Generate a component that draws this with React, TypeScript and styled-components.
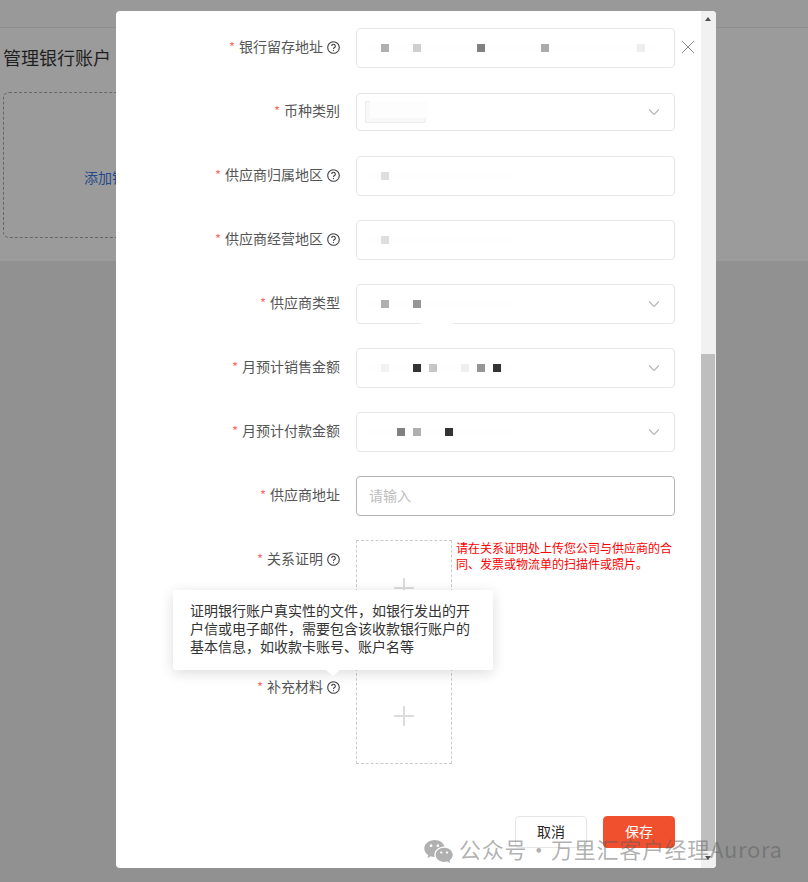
import styled, { createGlobalStyle } from "styled-components";
import { RiWechatFill } from "react-icons/ri";

const GlobalStyle = createGlobalStyle`
  html, body {
    margin: 0;
    padding: 0;
    background: #919191;
  }
  body {
    font-family: "Noto Sans CJK SC", "Liberation Sans", sans-serif;
    overflow: hidden;
  }
`;

const Page = styled.div`
  position: relative;
  width: 808px;
  height: 882px;
  overflow: hidden;
  background: #919191;
`;

const TopBar = styled.div`
  height: 27px;
  background: #999;
  border-bottom: 1px solid #8f8f8f;
`;

const Panel = styled.div`
  height: 234px;
  padding: 17px 0 0 3px;
  box-sizing: border-box;
  background: #9b9b9b;
  border-bottom: 1px solid #929292;
`;

const PageTitle = styled.h1`
  margin: 0 0 22px;
  font-size: 18px;
  font-weight: 400;
  line-height: 25px;
  color: #1f1f1f;
`;

const AddCard = styled.div`
  display: flex;
  align-items: center;
  justify-content: center;
  width: 246px;
  height: 146px;
  box-sizing: border-box;
  padding-top: 23px;
  border: 1px dashed #666;
  border-radius: 6px;
  font-size: 14px;
  color: #254a8c;
`;

const Modal = styled.div`
  position: absolute;
  top: 11px;
  left: 116px;
  display: flex;
  width: 600px;
  height: 857px;
  overflow: hidden;
  background: #fff;
  border-radius: 4px;
`;

const FormArea = styled.div`
  flex: 1;
  padding-top: 17px;
`;

const Row = styled.div<{ $gap?: number }>`
  display: flex;
  align-items: flex-start;
  gap: 16px;
  margin-bottom: ${(p) => p.$gap ?? 24}px;
`;

const Label = styled.div<{ $h?: number }>`
  display: flex;
  align-items: center;
  justify-content: flex-end;
  width: 224px;
  height: ${(p) => p.$h ?? 40}px;
  padding-bottom: 4px;
  box-sizing: border-box;
  font-size: 14px;
  color: #555;
`;

const Star = styled.span`
  margin-right: 4px;
  font-size: 13px;
  color: #fb6b66;
`;

const Help = styled.svg`
  width: 13px;
  height: 13px;
  margin: 3px 0 0 4px;
  flex: none;
`;

const Field = styled.div<{ $h?: number; $active?: boolean }>`
  position: relative;
  display: flex;
  align-items: center;
  justify-content: space-between;
  width: 319px;
  height: ${(p) => p.$h ?? 40}px;
  box-sizing: border-box;
  padding: 0 14px 0 8px;
  background: #fff;
  border: 1px solid ${(p) => (p.$active ? "#b3b3b3" : "#e6e6e6")};
  border-radius: 4px;
`;

const Placeholder = styled.span`
  padding: 0 0 3px 4px;
  font-size: 14px;
  color: #bdbdbd;
`;

const Mosaic = styled.div`
  display: flex;
  height: 8px;
`;

const Cell = styled.i<{ $c?: string }>`
  display: block;
  width: 8px;
  height: 8px;
  background: ${(p) => p.$c ?? "#fefefe"};
`;

const Tag = styled.div`
  position: relative;
  width: 61px;
  height: 22px;
  box-sizing: border-box;
  background: #f8f8f8;
  border: 1px solid #ececec;
  border-radius: 2px;
`;

const TagSmudge = styled.div`
  position: absolute;
  top: -1px;
  left: 4px;
  width: 58px;
  height: 17px;
  background: #fdfdfd;
`;

const BorderSmudge = styled.div`
  position: absolute;
  left: 64px;
  bottom: -2px;
  width: 32px;
  height: 4px;
  background: #fff;
`;

const Chevron = styled.svg`
  width: 12px;
  height: 8px;
  flex: none;
`;

const Uploads = styled.div`
  display: flex;
  align-items: flex-start;
  gap: 4px;
`;

const UploadBox = styled.div`
  display: flex;
  align-items: center;
  justify-content: center;
  width: 96px;
  height: 96px;
  box-sizing: border-box;
  border: 1px dashed #ccc;
  flex: none;
`;

const Plus = styled.svg`
  width: 22px;
  height: 22px;
`;

const Hint = styled.div`
  width: 219px;
  font-size: 12px;
  line-height: 16px;
  color: #f00;
`;

const Footer = styled.div`
  display: flex;
  justify-content: flex-end;
  gap: 16px;
  margin: 52px 26px 0 0;
`;

const Button = styled.button<{ $primary?: boolean }>`
  width: 72px;
  height: 32px;
  padding: 0 0 2px;
  box-sizing: border-box;
  border: 1px solid ${(p) => (p.$primary ? "#f1502f" : "#e6e6e6")};
  border-radius: 4px;
  background: ${(p) => (p.$primary ? "#f1502f" : "#fff")};
  font-family: inherit;
  font-size: 14px;
  color: ${(p) => (p.$primary ? "#fff" : "#262626")};
`;

const Scrollbar = styled.div`
  display: flex;
  flex-direction: column;
  align-items: flex-start;
  width: 15px;
  background: #f1f1f1;
`;

const ArrowUp = styled.div`
  width: 0;
  height: 0;
  margin: 6px 0 0 4px;
  border-left: 3.5px solid transparent;
  border-right: 3.5px solid transparent;
  border-bottom: 4px solid #505050;
`;

const ArrowDown = styled.div`
  width: 0;
  height: 0;
  margin: 5px 0 0 4px;
  border-left: 3.5px solid transparent;
  border-right: 3.5px solid transparent;
  border-top: 4px solid #505050;
`;

const Thumb = styled.div`
  width: 14px;
  height: 497px;
  margin-top: 333px;
  background: #bebebe;
`;

const CloseIcon = styled.svg`
  position: absolute;
  top: 29px;
  left: 565px;
  width: 14px;
  height: 14px;
`;

const Tooltip = styled.div`
  position: absolute;
  top: 579px;
  left: 57px;
  width: 320px;
  height: 80px;
  box-sizing: border-box;
  padding: 11px 17px;
  background: #fff;
  border-radius: 3px;
  box-shadow: 0 3px 14px rgba(0, 0, 0, 0.14);
  font-size: 14px;
  line-height: 18px;
  color: #333;

  &::after {
    content: "";
    position: absolute;
    left: 153px;
    bottom: -6px;
    border-left: 7px solid transparent;
    border-right: 7px solid transparent;
    border-top: 6px solid #fff;
  }
`;

const Watermark = styled.div`
  position: absolute;
  top: 833px;
  left: 423px;
  display: flex;
  align-items: flex-start;
  gap: 5px;
  font-size: 22px;
  letter-spacing: 0.7px;
  line-height: 30px;
  white-space: nowrap;
  color: rgba(90, 90, 90, 0.48);
`;

const WatermarkIcon = styled(RiWechatFill)`
  margin-top: 3px;
`;

const WatermarkDot = styled.span`
  margin: 0 -5px;
`;

type Cells = Record<number, string>;

function Blur({ cells, length = 36 }: { cells: Cells; length?: number }) {
  return (
    <Mosaic>
      {Array.from({ length }, (_, i) => (
        <Cell key={i} $c={cells[i]} />
      ))}
    </Mosaic>
  );
}

function HelpIcon() {
  return (
    <Help viewBox="0 0 13 13" fill="none" stroke="#3d3d3d" strokeWidth="1.1">
      <circle cx="6.5" cy="6.5" r="5.8" />
      <path d="M4.7 5.1a1.8 1.8 0 1 1 2.8 1.5c-.7.4-1 .8-1 1.4" />
      <path d="M6.5 9.1v1" />
    </Help>
  );
}

function ChevronIcon() {
  return (
    <Chevron viewBox="0 0 12 8" fill="none" stroke="#b5b5b5" strokeWidth="1.2">
      <path d="M1 1.5l5 5 5-5" />
    </Chevron>
  );
}

function PlusIcon() {
  return (
    <Plus viewBox="0 0 22 22" fill="none" stroke="#dcdcdc" strokeWidth="2">
      <path d="M11 1v20M1 11h20" />
    </Plus>
  );
}

function FieldLabel({ text, help, h }: { text: string; help?: boolean; h?: number }) {
  return (
    <Label $h={h}>
      <Star>*</Star>
      {text}
      {help && <HelpIcon />}
    </Label>
  );
}

const rows: { label: string; help?: boolean; select?: boolean; smudge?: boolean; cells: Cells }[] = [
  { label: "供应商归属地区", help: true, cells: { 2: "#dedede" } },
  { label: "供应商经营地区", help: true, cells: { 2: "#dedede" } },
  { label: "供应商类型", select: true, smudge: true, cells: { 2: "#b0b0b0", 6: "#959595" } },
  {
    label: "月预计销售金额",
    select: true,
    cells: { 2: "#f2f2f2", 6: "#333", 8: "#c6c6c6", 12: "#efefef", 14: "#959595", 16: "#333" },
  },
  { label: "月预计付款金额", select: true, cells: { 4: "#808080", 6: "#b0b0b0", 10: "#333" } },
];

export default function App() {
  return (
    <Page>
      <GlobalStyle />
      <TopBar />
      <Panel>
        <PageTitle>管理银行账户</PageTitle>
        <AddCard>添加银行账户</AddCard>
      </Panel>

      <Modal>
        <FormArea>
          <Row $gap={25}>
            <FieldLabel text="银行留存地址" help />
            <Field>
              <Blur cells={{ 2: "#b0b0b0", 6: "#cfcfcf", 14: "#808080", 22: "#aaa", 34: "#eee" }} />
            </Field>
          </Row>
          <Row $gap={25}>
            <FieldLabel text="币种类别" h={38} />
            <Field $h={38}>
              <Tag>
                <TagSmudge />
              </Tag>
              <ChevronIcon />
            </Field>
          </Row>
          {rows.map((row) => (
            <Row key={row.label}>
              <FieldLabel text={row.label} help={row.help} />
              <Field>
                <Blur cells={row.cells} length={18} />
                {row.select && <ChevronIcon />}
                {row.smudge && <BorderSmudge />}
              </Field>
            </Row>
          ))}
          <Row>
            <FieldLabel text="供应商地址" />
            <Field $active>
              <Placeholder>请输入</Placeholder>
            </Field>
          </Row>
          <Row $gap={32}>
            <FieldLabel text="关系证明" help />
            <Uploads>
              <UploadBox>
                <PlusIcon />
              </UploadBox>
              <Hint>请在关系证明处上传您公司与供应商的合同、发票或物流单的扫描件或照片。</Hint>
            </Uploads>
          </Row>
          <Row $gap={0}>
            <FieldLabel text="补充材料" help />
            <UploadBox>
              <PlusIcon />
            </UploadBox>
          </Row>
          <Footer>
            <Button>取消</Button>
            <Button $primary>保存</Button>
          </Footer>
        </FormArea>

        <Scrollbar>
          <ArrowUp />
          <Thumb />
          <ArrowDown />
        </Scrollbar>

        <CloseIcon viewBox="0 0 14 14" fill="none" stroke="#8c8c8c" strokeWidth="1">
          <path d="M1 1l12 12M13 1L1 13" />
        </CloseIcon>

        <Tooltip>证明银行账户真实性的文件，如银行发出的开户信或电子邮件，需要包含该收款银行账户的基本信息，如收款卡账号、账户名等</Tooltip>
      </Modal>

      <Watermark>
        <WatermarkIcon size={31} />
        <span>
          公众号<WatermarkDot> · </WatermarkDot>万里汇客户经理Aurora
        </span>
      </Watermark>
    </Page>
  );
}
